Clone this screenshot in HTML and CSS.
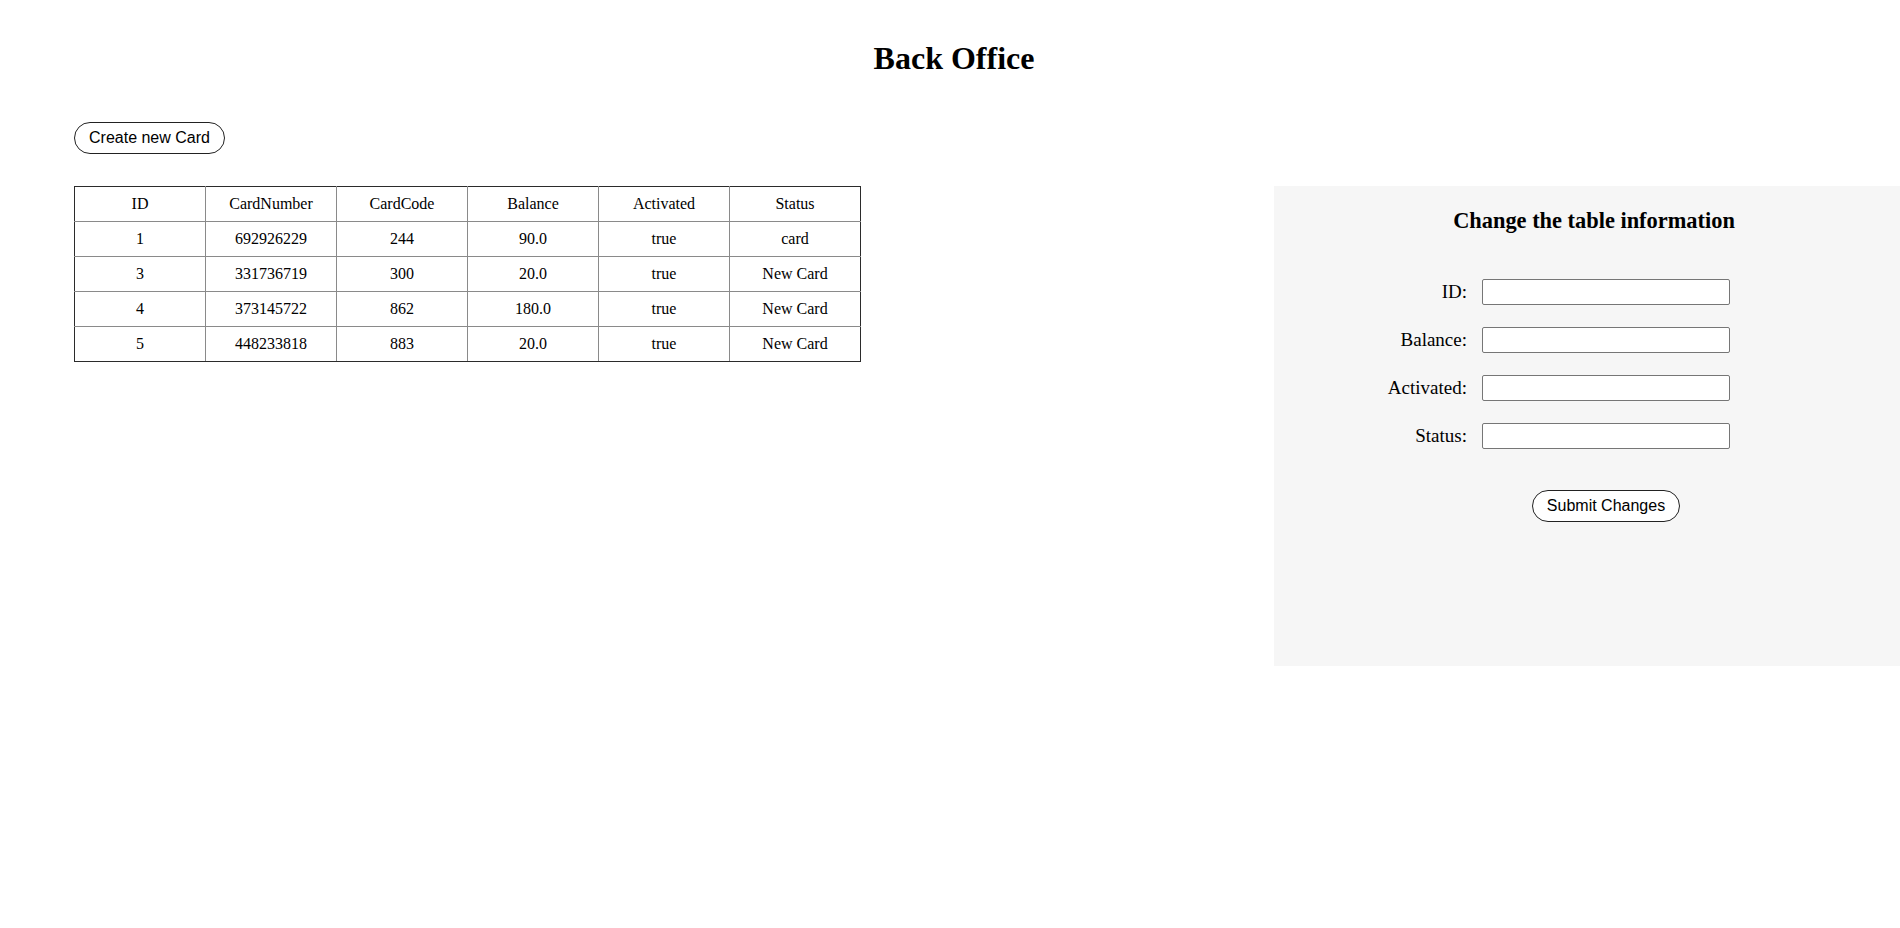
FILE: index.html
```html
<!DOCTYPE html>
<html lang="en">
<head>
<meta charset="utf-8">
<title>Back Office</title>
<link rel="stylesheet" href="styles.css">
</head>
<body>
<header class="page-header">
  <h1 class="page-title">Back Office</h1>
</header>
<div class="toolbar">
  <button class="pill-btn" type="button">Create new Card</button>
</div>
<main class="main">
  <table class="cards">
    <tbody>
      <tr><td>ID</td><td>CardNumber</td><td>CardCode</td><td>Balance</td><td>Activated</td><td>Status</td></tr>
      <tr><td>1</td><td>692926229</td><td>244</td><td>90.0</td><td>true</td><td>card</td></tr>
      <tr><td>3</td><td>331736719</td><td>300</td><td>20.0</td><td>true</td><td>New Card</td></tr>
      <tr><td>4</td><td>373145722</td><td>862</td><td>180.0</td><td>true</td><td>New Card</td></tr>
      <tr><td>5</td><td>448233818</td><td>883</td><td>20.0</td><td>true</td><td>New Card</td></tr>
    </tbody>
  </table>
  <aside class="panel">
    <h2 class="panel-title">Change the table information</h2>
    <form class="edit-form">
      <label class="field-label" for="f-id">ID:</label>
      <input class="field-input" id="f-id" type="text">
      <label class="field-label" for="f-balance">Balance:</label>
      <input class="field-input" id="f-balance" type="text">
      <label class="field-label" for="f-activated">Activated:</label>
      <input class="field-input" id="f-activated" type="text">
      <label class="field-label" for="f-status">Status:</label>
      <input class="field-input" id="f-status" type="text">
      <div class="submit-cell">
        <button class="pill-btn" type="button">Submit Changes</button>
      </div>
    </form>
  </aside>
</main>
</body>
</html>
```

FILE: styles.css
```css
html, body {
  margin: 0;
  padding: 0;
  background: #ffffff;
  color: #000000;
  font-family: "Liberation Serif", "Times New Roman", serif;
}

.page-header {
  padding-top: 40px;
  padding-left: 8px;
}

.page-title {
  margin: 0;
  text-align: center;
  font-size: 32px;
  line-height: 37px;
  font-weight: bold;
}

.toolbar {
  padding: 45px 0 0 74px;
}

.pill-btn {
  font-family: "Liberation Sans", Arial, sans-serif;
  font-size: 16px;
  line-height: 18px;
  color: #000;
  background: #ffffff;
  border: 1px solid #222;
  border-radius: 20px;
  padding: 6px 14px;
  margin: 0;
  cursor: pointer;
}

.main {
  display: flex;
  justify-content: space-between;
  align-items: flex-start;
  margin-top: 32px;
  padding-left: 74px;
}

.cards {
  width: 787px;
  border-collapse: collapse;
  font-size: 16px;
  table-layout: fixed;
}

.cards td {
  border: 1px solid #8a8a8a;
  text-align: center;
  padding: 8px 2px;
  line-height: 18px;
}

.cards tr:first-child td {
  border-top-color: #2b2b2b;
}

.cards tr:last-child td {
  border-bottom-color: #2b2b2b;
}

.cards td:first-child {
  border-left-color: #2b2b2b;
}

.cards td:last-child {
  border-right-color: #2b2b2b;
}

.panel {
  width: 626px;
  height: 480px;
  box-sizing: border-box;
  background: #f6f6f6;
  padding-top: 22px;
}

.panel-title {
  margin: 0;
  padding-left: 14px;
  text-align: center;
  font-size: 22.4px;
  line-height: 26px;
  font-weight: bold;
}

.edit-form {
  display: grid;
  grid-template-columns: 80px 248px;
  column-gap: 15px;
  row-gap: 22px;
  align-items: center;
  margin-top: 45px;
  padding-left: 113px;
}

.field-label {
  text-align: right;
  font-size: 19px;
  white-space: nowrap;
}

.field-input {
  box-sizing: border-box;
  width: 248px;
  height: 26px;
  margin: 0;
  border: 1px solid #767676;
  border-radius: 2px;
  background: #ffffff;
  font-size: 14px;
}

.submit-cell {
  grid-column: 2;
  display: flex;
  justify-content: center;
  margin-top: 19px;
}
```
